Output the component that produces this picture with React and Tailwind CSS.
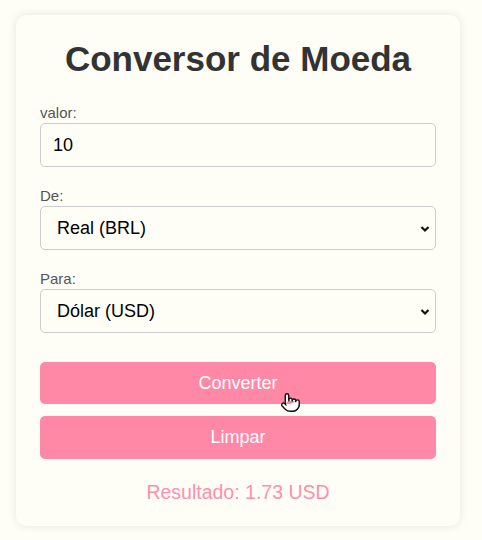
import { Pointer } from 'lucide-react';

function Field({ label, children }) {
  return (
    <div className="mb-[20px]">
      <label className="block text-[15px] leading-[18px] text-[#555] mb-[1px]">{label}</label>
      {children}
    </div>
  );
}

function Select({ value, options }) {
  return (
    <div className="relative">
      <select
        defaultValue={value}
        className="block w-full h-[44px] appearance-none rounded-[5px] border border-[#ccc] bg-transparent pl-[16px] pr-8 text-[18px] text-black"
      >
        {options.map((o) => (
          <option key={o}>{o}</option>
        ))}
      </select>
      <svg
        className="pointer-events-none absolute right-[6px] top-[19px]"
        width="10"
        height="8"
        viewBox="0 0 10 8"
      >
        <path d="M1.5 2 L5 5.5 L8.5 2" fill="none" stroke="#111" strokeWidth="2.2" />
      </svg>
    </div>
  );
}

export default function App() {
  const moedas = ['Real (BRL)', 'Dólar (USD)', 'Euro (EUR)'];

  return (
    <div
      className="min-h-[540px] w-[482px] bg-[#fefef7] pt-[15px] pb-[14px]"
      style={{ fontFamily: '"Liberation Sans", Arial, sans-serif' }}
    >
      <div className="relative ml-[16px] w-[444px] rounded-[10px] bg-[#fefef7] px-[24px] pt-[21px] pb-[22px] shadow-[0_0_10px_rgba(0,0,0,0.1)]">
        <h1 className="text-center text-[35px] font-bold leading-[46px] text-[#333] mb-[22px]">
          Conversor de Moeda
        </h1>

        <Field label="valor:">
          <input
            type="number"
            defaultValue="10"
            className="block w-full h-[44px] rounded-[5px] border border-[#ccc] bg-transparent px-[12px] text-[18px] text-black"
          />
        </Field>

        <Field label="De:">
          <Select value="Real (BRL)" options={moedas} />
        </Field>

        <Field label="Para:">
          <Select value="Dólar (USD)" options={moedas} />
        </Field>

        <div className="mt-[29px] flex flex-col gap-[12px]">
          <button className="h-[42px] w-full rounded-[5px] bg-[#ff88a6] text-[18px] text-white">
            Converter
          </button>
          <button className="h-[43px] w-full rounded-[5px] bg-[#ff88a6] text-[18px] text-white">
            Limpar
          </button>
        </div>

        <p className="mt-[21px] text-center text-[19.5px] leading-[24px] text-[#ff8fab]">
          Resultado: 1.73 USD
        </p>

        <Pointer
          className="absolute left-[264px] top-[377px]"
          size={21}
          fill="white"
          color="#111"
          strokeWidth={1.6}
        />
      </div>
    </div>
  );
}
